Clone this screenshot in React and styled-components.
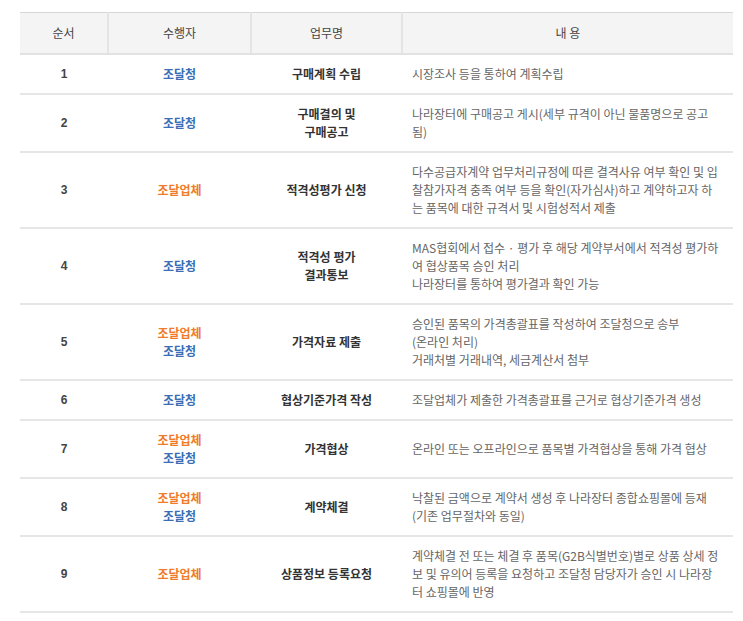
import React from 'react';
import styled, { createGlobalStyle } from 'styled-components';

const Global = createGlobalStyle`
  body{margin:0;background:#fff;font-family:"Noto Sans CJK KR","Liberation Sans",sans-serif;}
`;

const rows = [
  ['1', [['b', '조달청']], ['구매계획 수립'], ['시장조사 등을 통하여 계획수립']],
  ['2', [['b', '조달청']], ['구매결의 및', '구매공고'], ['나라장터에 구매공고 게시(세부 규격이 아닌 물품명으로 공고', '됨)']],
  ['3', [['o', '조달업체']], ['적격성평가 신청'], ['다수공급자계약 업무처리규정에 따른 결격사유 여부 확인 및 입', '찰참가자격 충족 여부 등을 확인(자가심사)하고 계약하고자 하', '는 품목에 대한 규격서 및 시험성적서 제출']],
  ['4', [['b', '조달청']], ['적격성 평가', '결과통보'], ['MAS협회에서 접수 · 평가 후 해당 계약부서에서 적격성 평가하', '여 협상품목 승인 처리', '나라장터를 통하여 평가결과 확인 가능']],
  ['5', [['o', '조달업체'], ['b', '조달청']], ['가격자료 제출'], ['승인된 품목의 가격총괄표를 작성하여 조달청으로 송부', '(온라인 처리)', '거래처별 거래내역, 세금계산서 첨부']],
  ['6', [['b', '조달청']], ['협상기준가격 작성'], ['조달업체가 제출한 가격총괄표를 근거로 협상기준가격 생성']],
  ['7', [['o', '조달업체'], ['b', '조달청']], ['가격협상'], ['온라인 또는 오프라인으로 품목별 가격협상을 통해 가격 협상']],
  ['8', [['o', '조달업체'], ['b', '조달청']], ['계약체결'], ['낙찰된 금액으로 계약서 생성 후 나라장터 종합쇼핑몰에 등재', '(기존 업무절차와 동일)']],
  ['9', [['o', '조달업체']], ['상품정보 등록요청'], ['계약체결 전 또는 체결 후 품목(G2B식별번호)별로 상품 상세 정', '보 및 유의어 등록을 요청하고 조달청 담당자가 승인 시 나라장', '터 쇼핑몰에 반영']],
];

export default function App() {
  return (
    <Wrap>
      <Global />
      <Table>
        <colgroup>
          <col style={{ width: 88 }} />
          <col style={{ width: 143 }} />
          <col style={{ width: 151 }} />
          <col />
        </colgroup>
        <thead>
          <tr>
            <Th>순서</Th>
            <Th>수행자</Th>
            <Th>업무명</Th>
            <Th>내 용</Th>
          </tr>
        </thead>
        <tbody>
          {rows.map(([n, who, task, desc]) => (
            <tr key={n}>
              <Num>{n}</Num>
              <Td>{who.map(([c, t]) => <Actor key={t} $orange={c === 'o'}>{t}</Actor>)}</Td>
              <Task>{task.map((t) => <Line key={t}>{t}</Line>)}</Task>
              <Desc>{desc.map((t) => <Line key={t}>{t}</Line>)}</Desc>
            </tr>
          ))}
        </tbody>
      </Table>
    </Wrap>
  );
}

const Wrap = styled.div`
  padding:12px 10px 0 20px;
`;
const Table = styled.table`
  width:713px;
  border-collapse:collapse;
  table-layout:fixed;
  border-top:1px solid #d6d6d6;
`;
const Th = styled.th`
  height:40px;padding:0;
  background:#f4f4f4;
  font-weight:400;font-size:12px;line-height:18px;color:#444;
  border-bottom:2px solid #e2e2e2;
  border-left:2px solid #e4e4e4;
  &:first-child{border-left:none;}
`;
const Td = styled.td`
  padding:10px 0;
  text-align:center;vertical-align:middle;
  font-size:12px;line-height:18px;
  border-bottom:2px solid #e6e6e6;
`;
const Line = styled.div`
  height:18px;
`;
const Num = styled(Td)`
  font-weight:700;color:#444;font-family:"Liberation Sans",sans-serif;
`;
const Actor = styled(Line)`
  font-weight:700;
  color:${({ $orange }) => ($orange ? '#f07b2a' : '#3a6eb5')};
`;
const Task = styled(Td)`
  font-weight:700;color:#333;
`;
const Desc = styled(Td)`
  text-align:left;color:#666;padding-left:10px;
`;
